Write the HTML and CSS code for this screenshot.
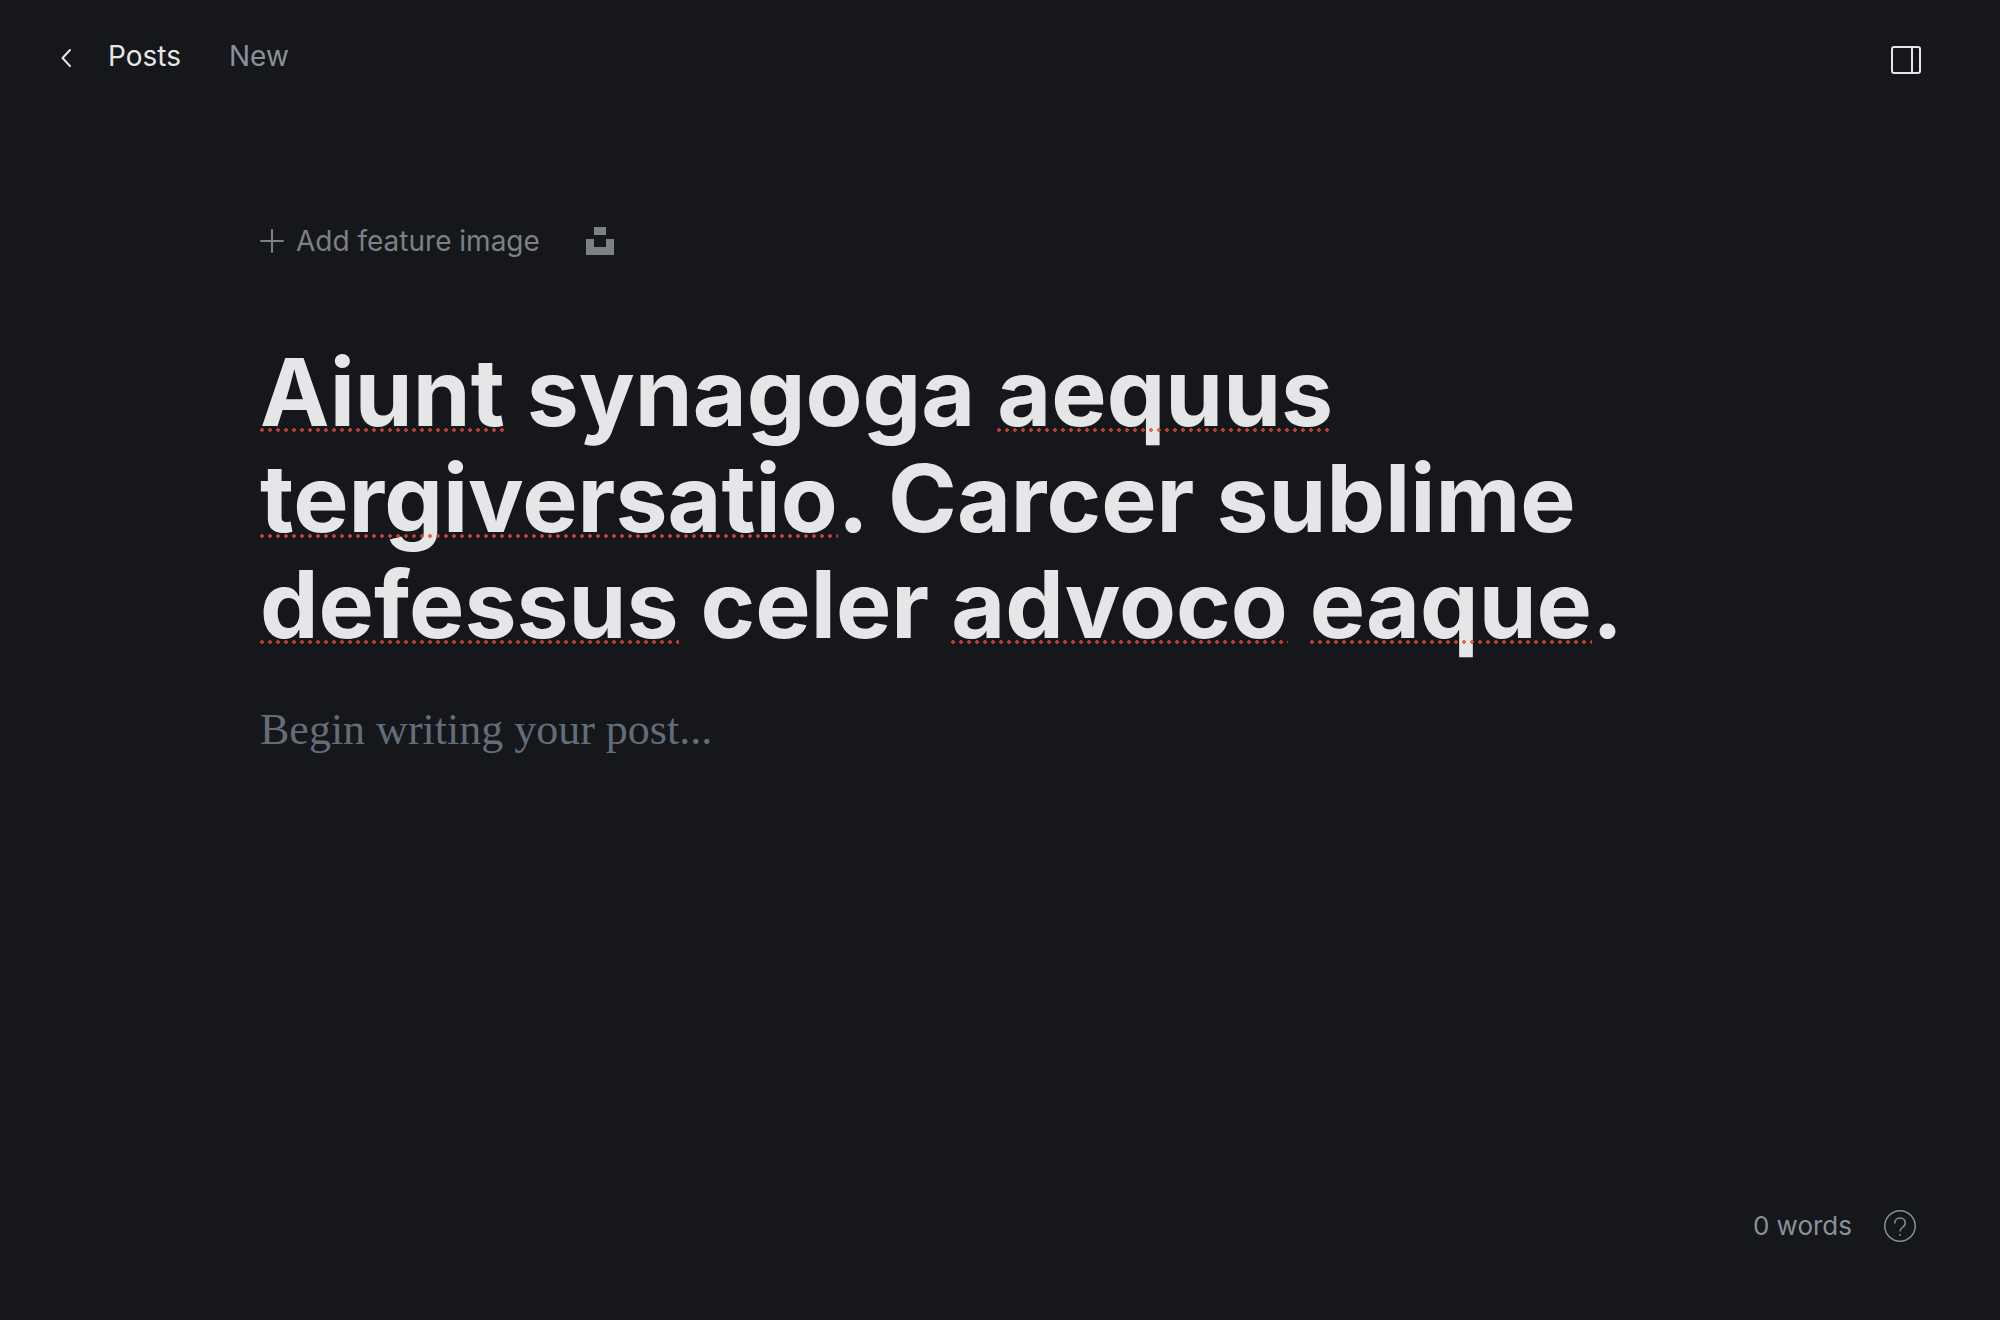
FILE: index.html
```html
<!DOCTYPE html>
<html lang="en">
<head>
<meta charset="utf-8">
<meta name="viewport" content="width=device-width, initial-scale=1">
<title>New post</title>
<link rel="stylesheet" href="styles.css">
</head>
<body>
<div class="editor">
  <header class="topbar">
    <nav class="breadcrumb">
      <a class="back" href="#posts">
        <svg class="chevron" width="12" height="24" viewBox="0 0 12 24" aria-hidden="true"><path d="M10 6 2.500 14 10 22"/></svg>
        Posts
      </a>
      <span class="status">New</span>
    </nav>
    <button class="icon-button" type="button" aria-label="Settings">
      <svg class="panel-icon" width="30" height="28" viewBox="0 0 30 28" aria-hidden="true"><rect x="1" y="1" width="28" height="26" rx="2"/><path d="M21 1v26"/></svg>
    </button>
  </header>
  <main class="canvas">
    <div class="feature">
      <button class="add-image" type="button">
        <svg class="plus" width="24" height="24" viewBox="0 0 24 24" aria-hidden="true"><path d="M12 1v22M1 12h22"/></svg>
        Add feature image
      </button>
      <button class="icon-button" type="button" aria-label="Unsplash">
        <svg class="unsplash" width="28" height="28" viewBox="0 0 28 28" aria-hidden="true"><path d="M8 0h12v8H8zM0 12h8v8h12v-8h8v16H0z"/></svg>
      </button>
    </div>
    <h1 class="title"><span class="misspelt">Aiunt</span> synagoga <span class="misspelt">aequus</span> <span class="misspelt">tergiversatio</span>. Carcer sublime <span class="misspelt">defessus</span> celer <span class="misspelt">advoco</span> <span class="misspelt">eaque</span>.</h1>
    <textarea class="body-text" rows="1" aria-label="Post body" placeholder="Begin writing your post..."></textarea>
  </main>
  <footer class="footer">
    <span>0 words</span>
    <a class="help" href="#help" aria-label="Help">
      <svg class="help-icon" width="32" height="32" viewBox="0 0 32 32" aria-hidden="true"><circle cx="16" cy="16" r="15.200"/><path d="M10.700 13.500c0-3.300 2.300-5.500 5.300-5.500s5.300 2 5.300 5c0 4.500-5.300 4-5.300 8.500"/><path d="M16 24v1.800"/></svg>
    </a>
  </footer>
</div>
</body>
</html>
```

FILE: styles.css
```css
* {
  box-sizing: border-box;
}

body {
  margin: 0;
  background: #15171a;
  color: #7c8087;
  font: 400 28px/36px Inter, "Liberation Sans", sans-serif;
}

a {
  color: inherit;
  text-decoration: none;
}

button {
  padding: 0;
  border: 0;
  background: none;
  color: inherit;
  font: inherit;
  cursor: pointer;
}

svg {
  display: block;
  fill: none;
  stroke: currentColor;
  stroke-width: 2;
}

.editor {
  display: flex;
  flex-direction: column;
  min-height: 100vh;
}

.topbar {
  display: flex;
  align-items: flex-end;
  justify-content: space-between;
  padding: 38px 79px 0 60px;
}

.breadcrumb {
  display: flex;
  gap: 48px;
}

.back {
  display: flex;
  align-items: center;
  gap: 36px;
  color: #e5e6e8;
}

.chevron {
  stroke-linecap: round;
  stroke-linejoin: round;
}

.status {
  color: #8b909a;
}

.icon-button {
  color: #7c8087;
}

.topbar .icon-button {
  color: #e5e6e8;
}

.canvas {
  width: 100%;
  max-width: 1480px;
  margin: 0 auto;
  padding: 149px 60px 60px 0;
}

.feature {
  display: flex;
  align-items: center;
  gap: 46px;
}

.add-image {
  display: flex;
  align-items: center;
  gap: 12px;
}

.plus {
  stroke-linecap: round;
}

.unsplash {
  fill: currentColor;
  stroke: none;
}

.title {
  margin: 80px 0 0;
  color: #e5e6e8;
  font-size: 93px;
  font-weight: 700;
  line-height: 106px;
}

.misspelt {
  position: relative;
}

.misspelt::after {
  position: absolute;
  right: 0;
  bottom: 16px;
  left: 0;
  height: 4px;
  background: radial-gradient(circle at 2px 2px, rgb(232 69 53 / 80%) 2px, transparent 2px) 0 0 / 8px 4px repeat-x;
  content: "";
}

.body-text {
  display: block;
  width: 100%;
  height: 60px;
  margin-top: 43px;
  padding: 0;
  border: 0;
  outline: 0;
  resize: none;
  background: none;
  color: #e5e6e8;
  font: 44px/60px Georgia, "Liberation Serif", serif;
}

.body-text::placeholder {
  color: #626d79;
  opacity: 1;
}

.footer {
  display: flex;
  align-items: center;
  justify-content: flex-end;
  gap: 32px;
  margin-top: auto;
  padding: 0 84px 76px;
  color: #8b909a;
  font-size: 26px;
}

.help-icon {
  stroke-width: 1.5;
}
```
